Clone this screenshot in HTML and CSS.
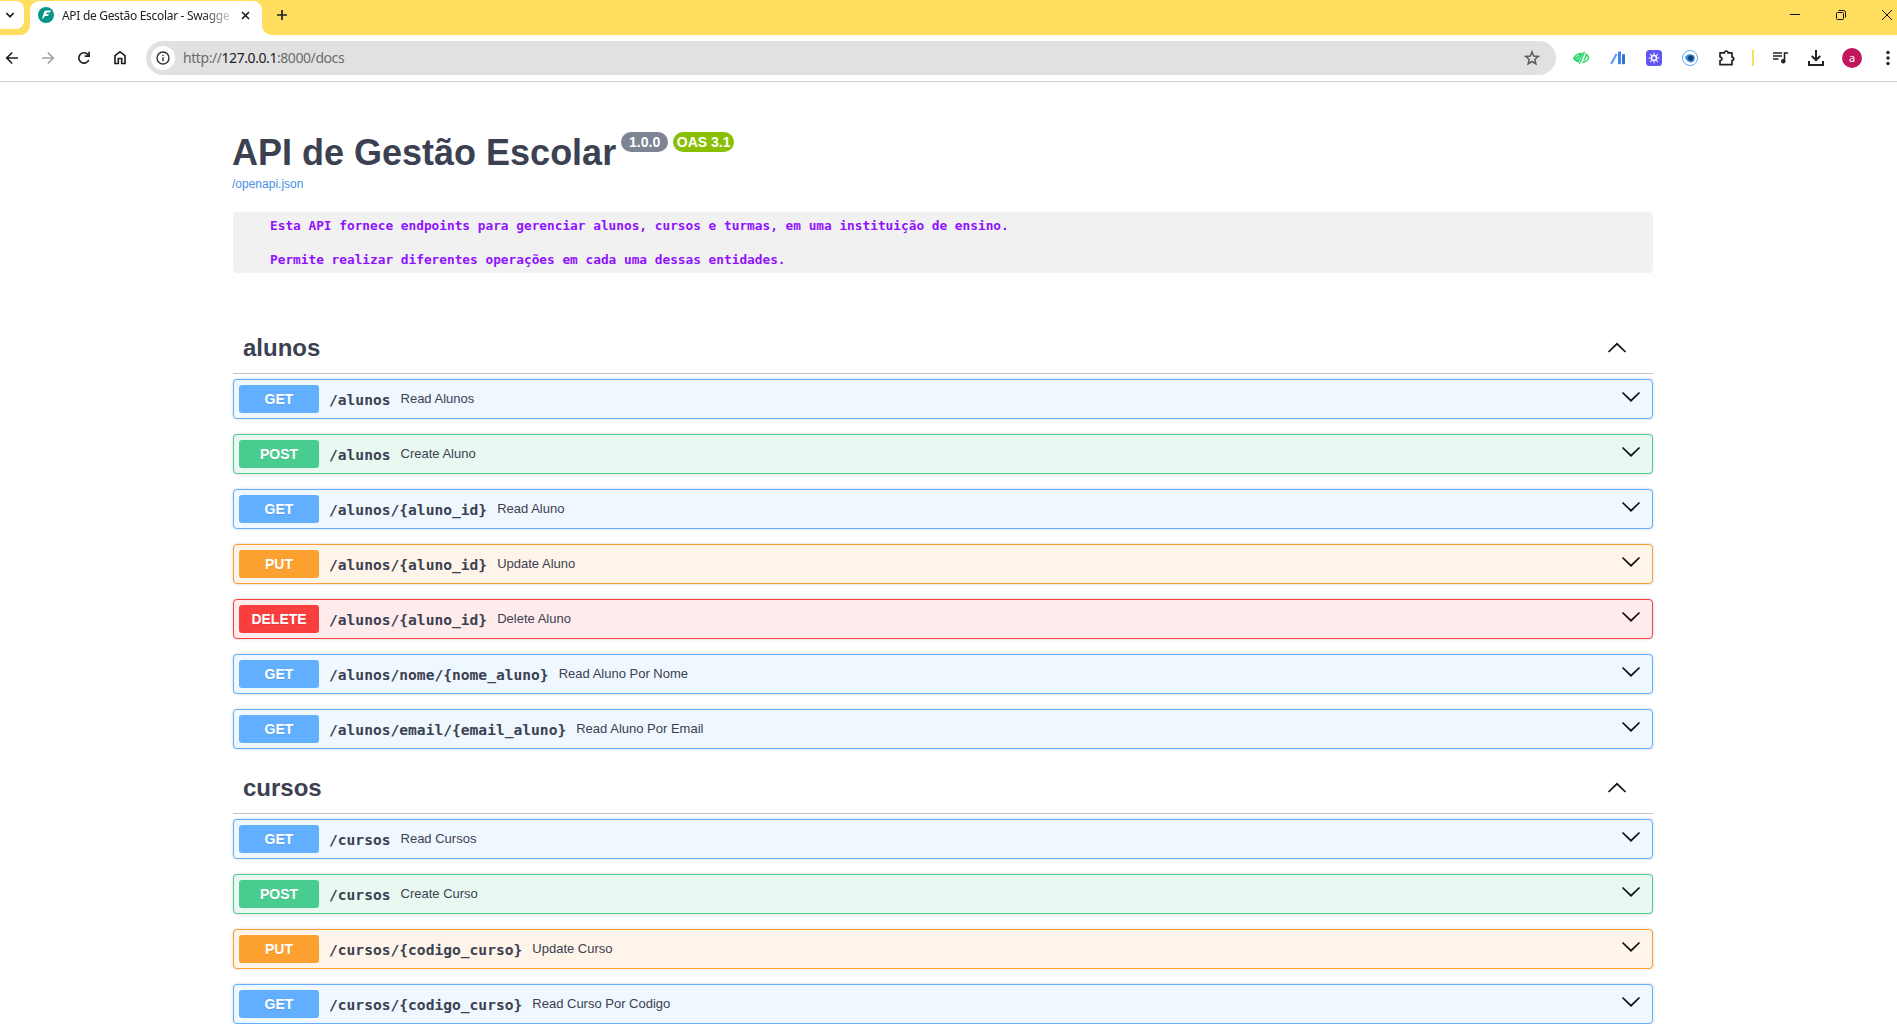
FILE: index.html
```html
<!DOCTYPE html>
<html lang="pt-BR">
<head>
<meta charset="utf-8">
<title>API de Gestão Escolar - Swagger UI</title>
<link rel="stylesheet" href="styles.css">
</head>
<body>
<header class="browser">
  <div class="tabstrip">
    <div class="tab-search"><svg width="10" height="8" viewBox="0 0 10 8"><path d="M1.3 2 5 5.7 8.7 2"/></svg></div>
    <div class="tab">
      <svg class="favicon" width="16" height="16" viewBox="0 0 16 16"><circle cx="8" cy="8" r="8" fill="#059587"/><path d="M13 3.500H7.500L6.300 4.500 3.800 12.300 6.200 10.200 7 8.900H9.800L11.200 7.300H8.200L8.800 5.500H12Z" fill="#fff"/></svg>
      <span class="tab-title">API de Gestão Escolar - Swagge</span>
      <svg class="tab-close" width="9" height="9" viewBox="0 0 9 9"><path d="M1 1l7 7M8 1 1 8"/></svg>
    </div>
    <svg class="new-tab" width="10" height="10" viewBox="0 0 10 10"><path d="M5 0v10M0 5h10"/></svg>
    <div class="window-controls">
      <svg width="10" height="10" viewBox="0 0 10 10"><path d="M0 4.5h10"/></svg>
      <svg width="10" height="10" viewBox="0 0 10 10"><rect x=".5" y="2.5" width="7" height="7" rx="1"/><path d="M2.5.5h5a2 2 0 0 1 2 2v5"/></svg>
      <svg width="10" height="10" viewBox="0 0 10 10"><path d="M0 0l10 10M10 0 0 10"/></svg>
    </div>
  </div>
  <div class="toolbar">
    <div class="nav">
      <svg width="24" height="24" viewBox="0 0 24 24"><path d="M18 12H7M12.2 6.5 6.7 12l5.5 5.5"/></svg>
      <svg class="disabled" width="24" height="24" viewBox="0 0 24 24"><path d="M6 12h11M11.8 6.5l5.5 5.5-5.5 5.5"/></svg>
      <svg width="24" height="24" viewBox="0 0 24 24"><path d="M16.8 14a5.2 5.2 0 1 1-.8-5.4l1 1.3"/><path d="M17.1 5.8v4.4h-4.4"/></svg>
      <svg width="24" height="24" viewBox="0 0 24 24"><path d="M7 17.5v-7.8l5-3.9 5 3.9v7.8h-3.3v-5h-3.4v5z"/></svg>
    </div>
    <div class="omnibox">
      <div class="site-info"><svg width="14" height="14" viewBox="0 0 14 14"><circle cx="7" cy="7" r="6"/><path d="M7 6.3v4M7 3.7v1.3"/></svg></div>
      <span class="url">http://<b>127.0.0.1</b>:8000/docs</span>
      <svg class="star" width="16" height="16" viewBox="0 0 16 16"><path d="M8 1.8l1.7 4.3 4.6.3-3.5 3 1.1 4.5L8 11.5l-3.9 2.4 1.1-4.5-3.500-3 4.600-.3z"/></svg>
    </div>
    <div class="extensions">
      <svg width="18" height="16" viewBox="0 0 18 16"><path d="M1 8C3 4 6.500 2.500 11 2.700L6.500 12.500C4 12 2 10.500 1 8Z" fill="#25d467"/><path d="M3.500 7.500C4.500 6 5.500 5.300 7 5M4.800 9.800l2.500-3" stroke="#fff" fill="none" stroke-width=".9"/><path d="M12.500 1.800 7.500 13.800M13.500 4c1.600.8 2.800 2.200 3.200 3.800-1 2.800-3.500 4.300-6.500 4.500M11.800 10.500l2.600-5" fill="none" stroke="#25d467" stroke-width="1.400"/></svg>
      <svg width="16" height="16" viewBox="0 0 16 16"><path d="M1.200 14 6.500 4" stroke="#669df6" stroke-width="2.200"/><path d="M8 1.500h3v12.700H8z" fill="#4285f4"/><path d="M12 4.200h3v10h-3z" fill="#3970c8"/></svg>
      <svg width="16" height="16" viewBox="0 0 16 16"><rect width="16" height="16" rx="3.500" fill="#6257f5"/><circle cx="8" cy="8" r="2.500" fill="none" stroke="#fff" stroke-width="1.500"/><path d="M8 2.700v2M8 11.300v2M2.700 8h2M11.300 8h2M4.200 4.200l1.500 1.500M10.300 10.300l1.500 1.500M11.800 4.200l-1.500 1.500M5.700 10.300l-1.500 1.500" stroke="#fff" stroke-width="1.100"/></svg>
      <svg width="16" height="16" viewBox="0 0 16 16"><circle cx="8" cy="8" r="7.500" fill="#fff" stroke="#65a6ef"/><path d="M3 7.500C5 4 10 3 12.500 6.500c1 3-1 6-4 6C6 12 4 10 3 7.500Z" fill="#2d86e5"/><circle cx="8.700" cy="8" r="2.600" fill="#153f72"/></svg>
      <svg width="18" height="18" viewBox="0 0 18 18"><path d="M2 3.800h4.500c0-2.400 3.500-2.400 3.500 0h4v4.300c2.300 0 2.300 3.300 0 3.300v4.300H2v-4.100c2.700-.5 2.700-3.200 0-3.700z" fill="none" stroke="#202124" stroke-width="1.700" stroke-linejoin="round"/></svg>
    </div>
    <span class="divider"></span>
    <div class="actions">
      <svg width="16" height="16" viewBox="0 0 16 16"><path d="M1 3h9M1 6h9M1 9h5.500M12.500 11.500V3H16" fill="none" stroke="#202124" stroke-width="1.600"/><circle cx="11.200" cy="11.300" r="2.200" fill="#202124"/></svg>
      <svg width="16" height="18" viewBox="0 0 16 18"><path d="M8 1v10M3.800 7 8 11.200 12.200 7M1 12v4h14v-4" fill="none" stroke="#202124" stroke-width="2"/></svg>
      <span class="avatar">a</span>
      <svg class="menu" width="4" height="16" viewBox="0 0 4 16"><g fill="#202124"><circle cx="2" cy="2.500" r="1.700"/><circle cx="2" cy="8" r="1.700"/><circle cx="2" cy="13.500" r="1.700"/></g></svg>
    </div>
  </div>
</header>

<svg width="0" height="0" class="defs"><defs>
  <symbol id="down" viewBox="0 0 20 12"><path d="M1.500 1.500 10 9.700l8.500-8.200"/></symbol>
  <symbol id="up" viewBox="0 0 20 12"><path d="M1.500 10 10 1.800l8.500 8.200"/></symbol>
</defs></svg>

<main class="docs">
  <section class="info">
    <div class="title-row"><h1>API de Gestão Escolar</h1><span class="badge version">1.0.0</span><span class="badge oas">OAS 3.1</span></div>
    <a class="spec" href="#">/openapi.json</a>
    <pre class="description">Esta API fornece endpoints para gerenciar alunos, cursos e turmas, em uma instituição de ensino.

Permite realizar diferentes operações em cada uma dessas entidades.</pre>
  </section>

  <section>
    <h2 class="tag">alunos<svg class="arrow"><use href="#up"/></svg></h2>
    <div class="op get"><span class="method">GET</span><span class="path">/alunos</span><span class="summary">Read Alunos</span><svg class="arrow"><use href="#down"/></svg></div>
    <div class="op post"><span class="method">POST</span><span class="path">/alunos</span><span class="summary">Create Aluno</span><svg class="arrow"><use href="#down"/></svg></div>
    <div class="op get"><span class="method">GET</span><span class="path">/alunos/{aluno_id}</span><span class="summary">Read Aluno</span><svg class="arrow"><use href="#down"/></svg></div>
    <div class="op put"><span class="method">PUT</span><span class="path">/alunos/{aluno_id}</span><span class="summary">Update Aluno</span><svg class="arrow"><use href="#down"/></svg></div>
    <div class="op delete"><span class="method">DELETE</span><span class="path">/alunos/{aluno_id}</span><span class="summary">Delete Aluno</span><svg class="arrow"><use href="#down"/></svg></div>
    <div class="op get"><span class="method">GET</span><span class="path">/alunos/nome/{nome_aluno}</span><span class="summary">Read Aluno Por Nome</span><svg class="arrow"><use href="#down"/></svg></div>
    <div class="op get"><span class="method">GET</span><span class="path">/alunos/email/{email_aluno}</span><span class="summary">Read Aluno Por Email</span><svg class="arrow"><use href="#down"/></svg></div>
  </section>

  <section>
    <h2 class="tag">cursos<svg class="arrow"><use href="#up"/></svg></h2>
    <div class="op get"><span class="method">GET</span><span class="path">/cursos</span><span class="summary">Read Cursos</span><svg class="arrow"><use href="#down"/></svg></div>
    <div class="op post"><span class="method">POST</span><span class="path">/cursos</span><span class="summary">Create Curso</span><svg class="arrow"><use href="#down"/></svg></div>
    <div class="op put"><span class="method">PUT</span><span class="path">/cursos/{codigo_curso}</span><span class="summary">Update Curso</span><svg class="arrow"><use href="#down"/></svg></div>
    <div class="op get last"><span class="method">GET</span><span class="path">/cursos/{codigo_curso}</span><span class="summary">Read Curso Por Codigo</span><svg class="arrow"><use href="#down"/></svg></div>
  </section>
</main>
</body>
</html>
```
FILE: styles.css
```css
* { box-sizing: border-box; }
body { margin: 0; background: #fff; color: #3b4151; font-family: "Liberation Sans", Arial, sans-serif; }
svg { display: block; flex: none; }
.defs { height: 0; }

/* Browser frame */
.browser { height: 82px; border-bottom: 1px solid #cdcfd1; font-family: "Noto Sans", sans-serif; }
.tabstrip { display: flex; height: 35px; background: #ffdd5e; }
.tab-search { width: 24px; height: 28px; margin: 1px 6px 0 0; padding: 10px 0 0 5px; background: #fff; border-radius: 0 8px 8px 0; }
.tab-search svg, .tab-close, .new-tab { fill: none; stroke: #202124; stroke-width: 1.7; }
.tab { position: relative; display: flex; align-items: center; width: 232px; height: 34px; margin-top: 1px; padding: 0 12px 8px 8px; background: #fff; border-radius: 9px 9px 0 0; }
.tab::before, .tab::after { content: ""; position: absolute; bottom: 0; width: 10px; height: 10px; }
.tab::before { left: -10px; background: radial-gradient(circle at 0 0, transparent 9.5px, #fff 10.5px); }
.tab::after { right: -10px; background: radial-gradient(circle at 100% 0, transparent 9.5px, #fff 10.5px); }
.favicon { margin-top: 2px; }
.tab-title { width: 168px; margin: 4px 0 0 8px; white-space: nowrap; font-size: 12px; line-height: 16px; letter-spacing: -.31px; color: #202124; -webkit-mask-image: linear-gradient(90deg, #000 140px, rgba(0,0,0,.2) 168px); mask-image: linear-gradient(90deg, #000 140px, rgba(0,0,0,.2) 168px); }
.tab-close { margin: 2px 0 0 12px; }
.new-tab { margin: 10px 0 0 15px; }
.window-controls { display: flex; gap: 36px; margin: 10px 5px 0 auto; fill: none; stroke: #111; stroke-width: 1; }
.toolbar { display: flex; align-items: center; height: 46px; }
.nav { display: flex; gap: 12px; width: 146px; fill: none; stroke: #202124; stroke-width: 1.7; }
.nav .disabled { stroke: #a0a1a3; }
.omnibox { display: flex; align-items: center; width: 1410px; height: 34px; padding: 0 16px 0 5px; background: #e1e1e1; border-radius: 17px; }
.site-info { display: grid; place-items: center; width: 24px; height: 24px; background: #fff; border-radius: 50%; fill: none; stroke: #303134; stroke-width: 1.4; }
.url { margin-left: 8px; font-size: 14px; line-height: 20px; letter-spacing: -.43px; color: #6b6c6e; }
.url b { font-weight: 400; color: #202124; }
.star { margin-left: auto; fill: none; stroke: #5b5d60; stroke-width: 1.5; }
.extensions { display: flex; align-items: center; gap: 20px; margin-left: 16px; }
.divider { width: 2px; height: 16px; margin-left: 16px; background: #ffdd5e; }
.actions { display: flex; align-items: center; margin-left: 18px; gap: 20px; }
.actions .avatar { margin-left: -2px; }
.actions .menu { margin-left: 4px; }
.avatar { width: 20px; height: 20px; border-radius: 50%; background: #c2185b; color: #fff; font-size: 11px; line-height: 19px; text-align: center; }

/* API documentation */
.docs { width: 1420px; margin-left: 233px; }
.info { height: 242px; padding-top: 50px; }
.title-row { display: flex; align-items: flex-start; height: 41px; }
h1 { margin: 0 0 0 -1px; font-size: 36px; line-height: 41px; }
.badge { height: 20px; border-radius: 20px; color: #fff; font-size: 14px; font-weight: 700; line-height: 20px; text-align: center; }
.version { width: 47px; margin-left: 5px; background: #7d8492; }
.oas { width: 61px; margin-left: 5px; background: #89bf04; }
.spec { display: block; margin: 4px 0 0 -1px; font-size: 12px; line-height: 14px; color: #4990e2; text-decoration: none; }
.description { height: 61px; margin: 21px 0 0; padding: 5px 37px; border-radius: 4px; background: #f1f1f1; color: #9012fe; font: 700 12.790px/17px "DejaVu Sans Mono", monospace; }
.tag { display: flex; align-items: center; height: 50px; margin: 0 0 5px; padding: 0 26px 2px 10px; border-bottom: 1px solid #c1c3c7; font-size: 24px; }
.arrow { width: 20px; height: 12px; margin-left: auto; fill: none; stroke: #111; stroke-width: 1.7; }
.op { display: flex; align-items: center; height: 40px; margin-bottom: 15px; padding: 0 11px 0 5px; border: 1px solid; border-radius: 4px; box-shadow: 0 0 3px rgba(0,0,0,.19); }
.op.last { margin-bottom: 0; }
.op .arrow { margin-bottom: 5px; }
.method { width: 80px; height: 28px; border-radius: 3px; color: #fff; font-size: 14px; font-weight: 700; line-height: 28px; text-align: center; text-shadow: 0 1px 0 rgba(0,0,0,.1); }
.path { margin: 1px 10px 0; font: 700 14.600px/20px "DejaVu Sans Mono", monospace; }
.summary { font-size: 13px; line-height: 16px; }
.get { background: #eff7ff; border-color: #61affe; } .get .method { background: #61affe; }
.post { background: #e9f9f2; border-color: #49cc90; } .post .method { background: #49cc90; }
.put { background: #fff4e9; border-color: #fca130; } .put .method { background: #fca130; }
.delete { background: #feebeb; border-color: #f93e3e; } .delete .method { background: #f93e3e; }
```
